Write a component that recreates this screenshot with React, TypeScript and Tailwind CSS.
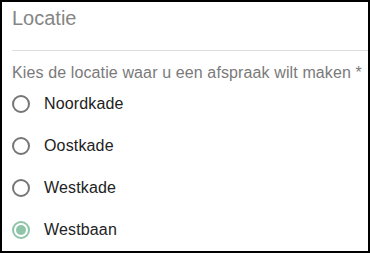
const locations = ["Noordkade", "Oostkade", "Westkade", "Westbaan"];

function Radio({ checked }: { checked: boolean }) {
  return (
    <span
      className={`flex items-center justify-center w-[18px] h-[18px] rounded-full border-2 shrink-0 ${
        checked ? "border-[#8ec5a8]" : "border-[#767676]"
      }`}
    >
      {checked && <span className="block w-[10px] h-[10px] rounded-full bg-[#8ec5a8]" />}
    </span>
  );
}

export default function App() {
  const selected = "Westbaan";

  return (
    <div
      className="w-[370px] h-[253px] border-2 border-black bg-white overflow-hidden"
      style={{ fontFamily: '"Liberation Sans", Arial, sans-serif' }}
    >
      {/* HEADER */}
      <div className="ml-[10px] h-[49px] pt-[5px] border-b border-[#dddddd]">
        <h2 className="text-[20px] leading-[23px] text-[#858585] font-normal">Locatie</h2>
      </div>

      {/* QUESTION */}
      <div className="pl-[10px]">
        <p className="mt-[12px] text-[16px] leading-[20px] tracking-[0.12px] text-[#7a7a7a]">
          Kies de locatie waar u een afspraak wilt maken *
        </p>

        <div className="flex flex-col">
          {locations.map((loc) => (
            <label key={loc} className="flex items-center h-[42px] gap-[14px]">
              <Radio checked={loc === selected} />
              <span className="text-[16px] leading-[20px] tracking-[0.15px] text-[#222222]">{loc}</span>
            </label>
          ))}
        </div>
      </div>
    </div>
  );
}
